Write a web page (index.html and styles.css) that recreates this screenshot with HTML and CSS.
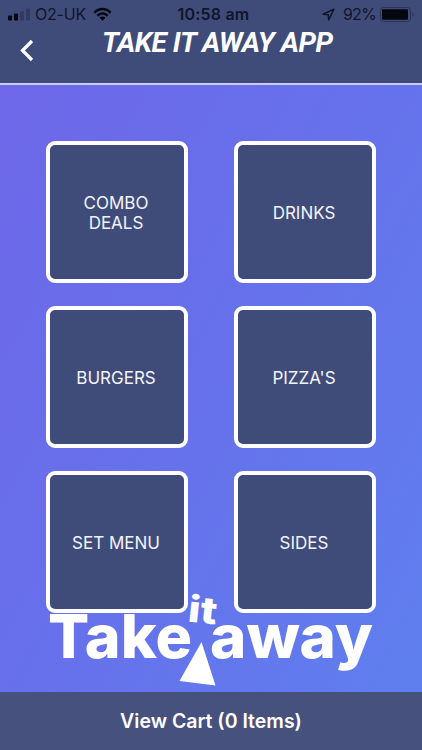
FILE: index.html
```html
<!DOCTYPE html>
<html lang="en">
<head>
  <meta charset="UTF-8">
  <meta name="viewport" content="width=device-width, initial-scale=1.0">
  <title>Take It Away App</title>
  <link rel="stylesheet" href="styles.css">
</head>
<body>
  <div class="app">
    <!-- Header -->
    <header class="header">
      <div class="status-bar">
        <div class="status-left">
          <svg class="signal" width="23" height="13" viewBox="0 0 23 13">
            <rect x="0" y="7.5" width="4" height="5" rx="1"/>
            <rect x="6" y="5.5" width="4" height="7" rx="1"/>
            <rect class="weak" x="12" y="3" width="4" height="9.5" rx="1"/>
            <rect class="weak" x="18" y="0.5" width="4" height="12" rx="1"/>
          </svg>
          <span class="carrier">O2-UK</span>
          <svg class="wifi" width="19" height="14" viewBox="0 0 18 13">
            <path d="M0.5 4.6 C5.2 -0.7 12.8 -0.7 17.5 4.6 L15.8 6.2 C12 2 6 2 2.2 6.2 Z"/>
            <path d="M3.4 7.3 C6.5 4 11.5 4 14.6 7.3 L12.9 9 C10.7 6.7 7.3 6.7 5.1 9 Z"/>
            <path d="M6.2 10.1 C7.8 8.6 10.2 8.6 11.8 10.1 L9 12.9 Z"/>
          </svg>
        </div>
        <span class="time">10:58 am</span>
        <div class="status-right">
          <svg class="location" width="13" height="13" viewBox="0 0 12 12">
            <path d="M11 1 L1 5.8 L5.8 6.2 L6.2 11 Z"/>
          </svg>
          <span class="percent">92%</span>
          <svg class="battery" width="35" height="15" viewBox="0 0 35 15">
            <rect class="case" x="0.5" y="0.5" width="30" height="14" rx="3"/>
            <rect x="2" y="2.3" width="26" height="10.4" rx="1"/>
            <path class="cap" d="M32.3 5 Q34.8 7.5 32.3 10 Z"/>
          </svg>
        </div>
      </div>
      <div class="nav">
        <button class="back" aria-label="Back">
          <svg width="14" height="23" viewBox="0 0 14 23">
            <path d="M12 2 L2.5 11.5 L12 21"/>
          </svg>
        </button>
        <h1 class="title">TAKE IT AWAY APP</h1>
      </div>
    </header>

    <!-- Menu Categories -->
    <main class="menu">
      <div class="tiles">
        <button class="tile">COMBO<br>DEALS</button>
        <button class="tile">DRINKS</button>
        <button class="tile">BURGERS</button>
        <button class="tile">PIZZA'S</button>
        <button class="tile">SET MENU</button>
        <button class="tile">SIDES</button>
      </div>
      <!-- Logo sits behind the tiles -->
      <svg class="logo" width="422" height="112" viewBox="0 580 422 112">
        <text class="word" x="48" y="658" textLength="144" lengthAdjust="spacingAndGlyphs">Take</text>
        <text class="word" x="210" y="658" textLength="163" lengthAdjust="spacingAndGlyphs">away</text>
        <text class="small-word" x="187" y="621.5" transform="rotate(6 187 621)" textLength="29" lengthAdjust="spacingAndGlyphs">it</text>
        <path d="M201.5 642 L179.5 681 L215.5 685.5 Z"/>
      </svg>
    </main>

    <!-- Cart -->
    <button class="cart">View Cart (0 Items)</button>
  </div>
</body>
</html>
```

FILE: styles.css
```css
/* App Styles */
body {
  font-family: Inter, Roboto, sans-serif;
  margin: 0;
}

button {
  border: none;
  padding: 0;
  font-family: inherit;
  color: #fff;
  cursor: pointer;
}

.app {
  display: flex;
  flex-direction: column;
  height: 750px;
  overflow: hidden;
}

/* Header */
.header {
  height: 83px;
  background-color: #3f4c7a;
  border-bottom: 2px solid #c9ccf3;
}

.status-bar {
  display: grid;
  grid-template-columns: 1fr auto 1fr;
  align-items: center;
  height: 28px;
  padding: 0 7px 0 8px;
  font-size: 16px;
  color: #11152a;
}

.status-bar svg {
  fill: #05070f;
}

.status-left,
.status-right {
  display: flex;
  align-items: center;
}

.status-right {
  justify-content: flex-end;
}

.signal .weak {
  fill: #303a62;
}

.carrier {
  margin: 0 7px 0 4px;
  letter-spacing: -0.2px;
}

.time {
  margin: 0 -2px 0 2px;
  font-weight: 600;
  letter-spacing: 0.2px;
}

.status-bar .location {
  fill: none;
  stroke: #11152a;
  stroke-width: 1.4;
  stroke-linejoin: round;
}

.percent {
  margin: 0 4px 0 8px;
  letter-spacing: -0.8px;
}

.status-bar .case {
  fill: none;
  stroke: #2b3357;
}

.status-bar .cap {
  fill: #2b3357;
}

.nav {
  display: flex;
  align-items: flex-start;
}

.back {
  width: 20px;
  height: 23px;
  margin: 11px 0 0 20px;
  background: none;
}

.back svg {
  display: block;
  fill: none;
  stroke: #fff;
  stroke-width: 3.2;
}

.title {
  margin: -2px 0 0 62px;
  font-family: Roboto, sans-serif;
  font-size: 28px;
  font-style: italic;
  font-weight: 700;
  letter-spacing: -0.45px;
  line-height: 34px;
  white-space: nowrap;
  color: #fff;
}

/* Menu */
.menu {
  position: relative;
  flex: 1;
  background: linear-gradient(118deg, #6e68e9 0%, #6770eb 45%, #5f7fee 100%);
}

.tiles {
  position: relative;
  z-index: 1;
  display: grid;
  grid-template-columns: 142px 142px;
  gap: 23px 46px;
  padding: 56px 0 0 46px;
}

.tile {
  box-sizing: border-box;
  height: 142px;
  background-color: #3f4c7a;
  border: 4.5px solid #fff;
  border-radius: 9px;
  font-size: 17px;
  line-height: 20.5px;
  padding: 2px 2px 0 0;
  color: #f3f4fb;
}

/* Logo */
.logo {
  position: absolute;
  left: 0;
  bottom: 0;
  fill: #fff;
}

.word {
  font-size: 60px;
  font-weight: 800;
}

.small-word {
  font-size: 37px;
  font-weight: 800;
}

/* Cart */
.cart {
  height: 58px;
  background-color: #46527d;
  font-size: 19.5px;
  font-weight: 600;
}
```
